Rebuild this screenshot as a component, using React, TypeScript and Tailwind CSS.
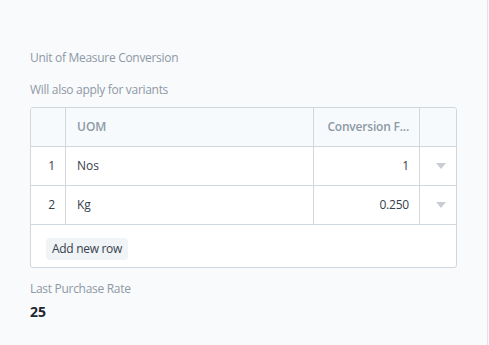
import React from "react";

const font = { fontFamily: '"Open Sans", "Noto Sans", sans-serif' };

function Caret() {
  return (
    <svg width="10" height="6" viewBox="0 0 10 6" className="block">
      <path d="M0 0 L10 0 L5 6 Z" fill="#c8cdd2" />
    </svg>
  );
}

export default function App() {
  const rows = [
    { idx: 1, uom: "Nos", cf: "1" },
    { idx: 2, uom: "Kg", cf: "0.250" },
  ];
  return (
    <div className="w-[489px] h-[345px] bg-[#f9fafb] flex" style={font}>
      <div className="w-[488px] h-full border-r border-[#dfe3e8] pl-[30px] pt-[49px]">
        <div className="text-[12px] leading-[18px] text-[#8d99a6] tracking-[-0.3px]">Unit of Measure Conversion</div>
        <div className="mt-[14px] text-[12px] leading-[18px] text-[#8d99a6] tracking-[-0.3px]">Will also apply for variants</div>
        <div className="mt-[8px] w-[427px] border border-[#d1d8dd] rounded-[3px] bg-white overflow-hidden">
          <div className="flex h-[39px] bg-[#f7fafc] border-b border-[#d1d8dd]">
            <div className="w-[35px] border-r border-[#d1d8dd]" />
            <div className="w-[248px] border-r border-[#d1d8dd] flex items-center pl-[11px] text-[12px] font-semibold text-[#8d99a6]">UOM</div>
            <div className="w-[106px] border-r border-[#d1d8dd] flex items-center justify-end pr-[10px] text-[12px] font-semibold text-[#8d99a6] tracking-[-0.2px]">Conversion F...</div>
            <div className="w-[36px]" />
          </div>
          {rows.map((r) => (
            <div key={r.idx} className="flex h-[39px] border-b border-[#d1d8dd]">
              <div className="w-[35px] border-r border-[#d1d8dd] flex items-center justify-end pr-[10px] text-[12px] text-[#36414c]">{r.idx}</div>
              <div className="w-[248px] border-r border-[#d1d8dd] flex items-center pl-[11px] text-[12px] text-[#36414c]">{r.uom}</div>
              <div className="w-[106px] border-r border-[#d1d8dd] flex items-center justify-end pr-[10px] text-[12px] text-[#36414c] tracking-[-0.2px]">{r.cf}</div>
              <div className="w-[36px] flex items-center justify-center pl-[6px]">
                <Caret />
              </div>
            </div>
          ))}
          <div className="h-[42px] pt-[10px] pl-[15px]">
            <button className="h-[22px] px-[6px] rounded-[4px] bg-[#f0f4f7] text-[12px] leading-[22px] text-[#36414c] tracking-[-0.3px]">Add new row</button>
          </div>
        </div>
        <div className="mt-[12px] text-[12px] leading-[18px] text-[#8d99a6] tracking-[-0.3px]">Last Purchase Rate</div>
        <div className="mt-[5px] text-[14px] leading-[18px] font-bold text-[#1f272e]">25</div>
      </div>
    </div>
  );
}
